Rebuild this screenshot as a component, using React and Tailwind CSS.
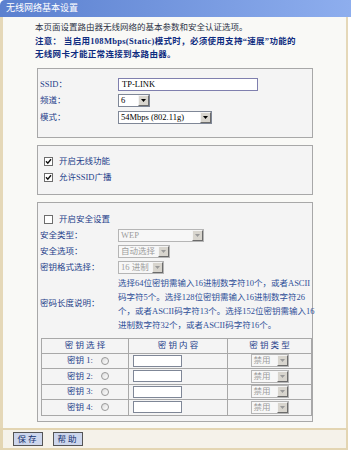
import React from "react";

const label = "text-[#24408a]";

function Arrow({ disabled }) {
  return (
    <span className="w-[11px] h-[11px] shrink-0 flex items-center justify-center bg-[#d8d5ce] border border-t-[#f4f4f4] border-l-[#f4f4f4] border-b-[#6b6b6b] border-r-[#6b6b6b]">
      <svg width="5" height="3" viewBox="0 0 5 3">
        <path d="M0 0 L5 0 L2.5 3 Z" fill={disabled ? "#9a9a9a" : "#000"} />
      </svg>
    </span>
  );
}

function Select({ text, className, disabled }) {
  return (
    <div
      className={`flex items-center h-[13px] border ${
        disabled ? "border-[#b5b5b5] bg-[#f7f7f7]" : "border-[#7f8797] bg-white"
      } ${className}`}
    >
      <span
        className={`flex-1 pl-[2px] leading-[11px] whitespace-nowrap overflow-hidden ${
          disabled ? "text-[#9c9c9c]" : "text-black"
        }`}
      >
        {text}
      </span>
      <Arrow disabled={disabled} />
    </div>
  );
}

function Check({ checked }) {
  return (
    <span className="w-[9px] h-[9px] shrink-0 flex items-center justify-center border border-[#6d6d6d] bg-white">
      {checked && (
        <svg width="7" height="7" viewBox="0 0 7 7">
          <path d="M1 3.2 L2.8 5.2 L6 1.3" stroke="#111" strokeWidth="1.4" fill="none" />
        </svg>
      )}
    </span>
  );
}

function Radio() {
  return (
    <span className="w-[8px] h-[8px] rounded-full border border-[#9a9a9a] bg-linear-to-br from-[#dcdcdc] to-white" />
  );
}

function Row({ name, children, className }) {
  return (
    <div className={`flex items-center ${className}`}>
      <span className={`w-[78px] shrink-0 ${label}`}>{name}</span>
      {children}
    </div>
  );
}

function KeyRow({ n }) {
  return (
    <tr className="h-[15.5px]">
      <td className="border border-[#a8a8a8]">
        <div className="flex items-center justify-center gap-[8px] pl-[6px]">
          <span className={label}>密钥 {n}:</span>
          <Radio />
        </div>
      </td>
      <td className="border border-[#a8a8a8]">
        <div className="ml-[4px] w-[49px] h-[12px] border border-[#7f8797] bg-white" />
      </td>
      <td className="border border-[#a8a8a8]">
        <div className="flex justify-center">
          <Select text="禁用" disabled className="w-[38px]" />
        </div>
      </td>
    </tr>
  );
}

export default function App() {
  return (
    <div className="w-[351px] h-[450px] bg-white flex flex-col text-[8.5px] font-['Liberation_Serif','Noto_Sans_CJK_SC',serif]">
      <div className="h-[17px] shrink-0 rounded-tl-[5px] bg-linear-to-r from-[#5b80cf] to-[#8eaeee] text-white text-[9px] leading-[17px] pl-[6px]">
        无线网络基本设置
      </div>

      <div className="h-[411px] shrink-0 mr-[3px] border-l-[3px] border-r-[2px] border-[#e5d8b8] bg-[#f9f9f6] pt-[4px]">
        <div className="pl-[32px] leading-[13.5px] whitespace-nowrap">
          <div className="text-[#2e3446]">本页面设置路由器无线网络的基本参数和安全认证选项。</div>
          <div className="font-bold text-[#0e2c80] tracking-[0.3px]">
            注意： 当启用108Mbps(Static)模式时，必须使用支持“速展”功能的
          </div>
          <div className="font-bold text-[#0e2c80] tracking-[0.3px]">无线网卡才能正常连接到本路由器。</div>
        </div>

        <div className="ml-[34px] mt-[6.5px] w-[276px] border border-[#a8a8a8] bg-[#f4f4f4] pt-[7px] pb-[11px] pl-[2px]">
          <Row name="SSID：" className="h-[16.5px]">
            <div className="w-[140px] h-[13px] border border-[#7f7fae] bg-white pl-[3px] leading-[11px] text-black">
              TP-LINK
            </div>
          </Row>
          <Row name="频道：" className="h-[16.5px]">
            <Select text="6" className="w-[32px]" />
          </Row>
          <Row name="模式：" className="h-[16.5px]">
            <Select text="54Mbps (802.11g)" className="w-[94px]" />
          </Row>
        </div>

        <div className="ml-[34px] mt-[7px] w-[276px] border border-[#a8a8a8] bg-[#f4f4f4] pt-[8px] pb-[8px] pl-[6px]">
          <div className="flex items-center gap-[6px] h-[16px]">
            <Check checked />
            <span className={label}>开启无线功能</span>
          </div>
          <div className="flex items-center gap-[6px] h-[16px]">
            <Check checked />
            <span className={label}>允许SSID广播</span>
          </div>
        </div>

        <div className="ml-[34px] mt-[7px] w-[276px] border border-[#a8a8a8] bg-[#f4f4f4] pt-[9px] pb-[5px]">
          <div className="flex items-center gap-[6px] h-[16px] pl-[6px]">
            <Check />
            <span className={label}>开启安全设置</span>
          </div>
          <div className="pl-[2px]">
            <Row name="安全类型：" className="h-[16px]">
              <Select text="WEP" disabled className="w-[86px]" />
            </Row>
            <Row name="安全选项：" className="h-[16px]">
              <Select text="自动选择" disabled className="w-[52px]" />
            </Row>
            <Row name="密钥格式选择：" className="h-[16px]">
              <Select text="16 进制" disabled className="w-[46px]" />
            </Row>
            <Row name="密码长度说明：" className="h-[56px]">
              <div className="leading-[14px] whitespace-nowrap text-[#2f4f98]">
                选择64位密钥需输入16进制数字符10个，或者ASCII
                <br />
                码字符5个。选择128位密钥需输入16进制数字符26
                <br />
                个，或者ASCII码字符13个。选择152位密钥需输入16
                <br />
                进制数字符32个，或者ASCII码字符16个。
              </div>
            </Row>
          </div>
          <table className="ml-[3px] mt-[6px] border-collapse w-[270px] table-fixed">
            <colgroup>
              <col className="w-[87px]" />
              <col className="w-[99px]" />
              <col className="w-[84px]" />
            </colgroup>
            <thead>
              <tr className="h-[15px]">
                <th className={`border border-[#a8a8a8] font-normal ${label}`}>密 钥 选 择</th>
                <th className={`border border-[#a8a8a8] font-normal ${label}`}>密 钥 内 容</th>
                <th className={`border border-[#a8a8a8] font-normal ${label}`}>密 钥 类 型</th>
              </tr>
            </thead>
            <tbody>
              <KeyRow n={1} />
              <KeyRow n={2} />
              <KeyRow n={3} />
              <KeyRow n={4} />
            </tbody>
          </table>
        </div>
      </div>

      <div className="flex-1 mr-[3px] border-l-[3px] border-r-[2px] border-t-2 border-b-[2px] border-[#e3d5b2] bg-[#f5f2ea] flex items-start gap-[10px] pl-[10px] pt-[2px]">
        <div className="w-[30px] h-[14px] flex items-center justify-center bg-[#cdd6ec] border border-[#555] text-[#14306e] tracking-[2px]">
          保存
        </div>
        <div className="w-[30px] h-[14px] flex items-center justify-center bg-[#cdd6ec] border border-[#555] text-[#14306e] tracking-[2px]">
          帮助
        </div>
      </div>
    </div>
  );
}
